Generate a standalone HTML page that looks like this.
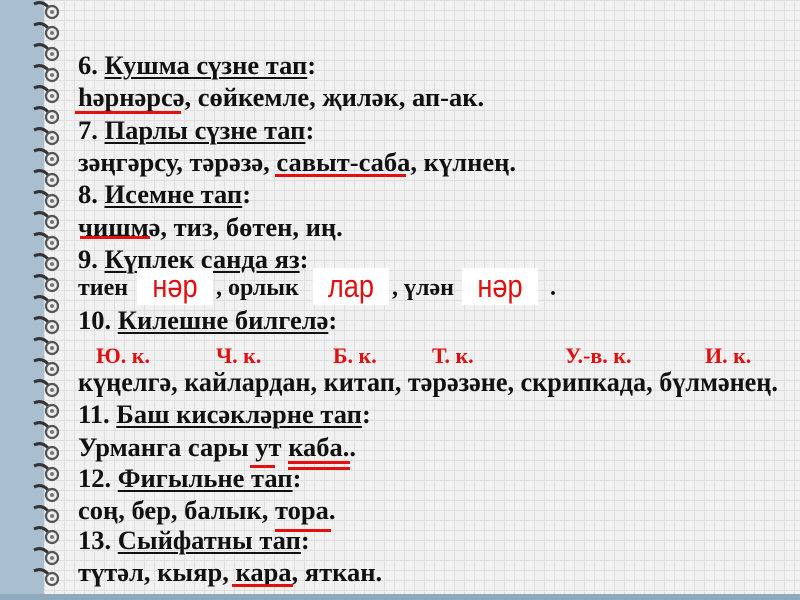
<!DOCTYPE html>
<html><head><meta charset="utf-8"><style>
body{margin:0;width:800px;height:600px;overflow:hidden;position:relative;font-family:"Liberation Serif",serif;}
#paper{position:absolute;left:44px;top:0;width:756px;height:600px;background-color:#f1f1f1;
background-image:linear-gradient(#dedede 1px,transparent 1px),linear-gradient(90deg,#dedede 1px,transparent 1px);background-size:10px 10px;}
#strip{position:absolute;left:0;top:0;width:44px;height:600px;background:#a9bfcf;}
#bot{position:absolute;left:0;top:594px;width:800px;height:6px;background:#8fa9bd;}
.l{position:absolute;left:78px;font-weight:bold;font-size:26.5px;line-height:28px;white-space:nowrap;color:#111;}
u{text-decoration-thickness:2px;text-underline-offset:3px;}
.r{position:absolute;background:#e31010;height:3px;}
.box{position:absolute;background:#fff;top:268px;width:76px;height:37px;}
.box span{display:block;color:#e01010;font-size:32px;font-family:"Liberation Sans Narrow","Liberation Sans",sans-serif;text-align:center;line-height:37px;transform:scaleX(0.85);}
.lab{position:absolute;top:343px;color:#e01010;font-weight:bold;font-size:22px;line-height:26px;}
</style></head><body>
<div id="strip"></div><div id="paper"></div>
<svg style="position:absolute;left:30px;top:0" width="40" height="600" fill="none">
<defs><g id="coil"><path d="M4 -6 Q12 -10 18 -3" stroke="#333" stroke-width="3"/><circle cx="22" cy="2" r="6" stroke="#555" stroke-width="2.2"/><circle cx="22" cy="2" r="2" fill="#777"/></g></defs>
<use href="#coil" y="10"/><use href="#coil" y="31"/><use href="#coil" y="52"/><use href="#coil" y="73"/><use href="#coil" y="94"/><use href="#coil" y="115"/><use href="#coil" y="136"/><use href="#coil" y="157"/><use href="#coil" y="178"/><use href="#coil" y="199"/><use href="#coil" y="220"/><use href="#coil" y="241"/><use href="#coil" y="262"/><use href="#coil" y="283"/><use href="#coil" y="304"/><use href="#coil" y="325"/><use href="#coil" y="346"/><use href="#coil" y="367"/><use href="#coil" y="388"/><use href="#coil" y="409"/><use href="#coil" y="430"/><use href="#coil" y="451"/><use href="#coil" y="472"/><use href="#coil" y="493"/><use href="#coil" y="514"/><use href="#coil" y="535"/><use href="#coil" y="556"/><use href="#coil" y="577"/>
</svg>
<div id="bot"></div>
<div class="l" style="top:51px">6. <u>Кушма сүзне тап</u>:</div>
<div class="l" style="top:83px">һәрнәрсә, сөйкемле, җиләк, ап-ак.</div>
<div class="l" style="top:116px">7. <u>Парлы сүзне тап</u>:</div>
<div class="l" style="top:148px">зәңгәрсу, тәрәзә, савыт-саба, күлнең.</div>
<div class="l" style="top:180px">8. <u>Исемне тап</u>:</div>
<div class="l" style="top:213px">чишмә, тиз, бөтен, иң.</div>
<div class="l" style="top:245px">9. <u>Күплек санда яз</u>:</div>
<div class="l" style="top:274px;font-size:24px">тиен</div>
<div class="l" style="top:274px;left:216px;font-size:24px">, орлык</div>
<div class="l" style="top:274px;left:392px;font-size:24px">, үлән</div>
<div class="l" style="top:274px;left:550px;font-size:24px">.</div>
<div class="box" style="left:137px"><span>нәр</span></div>
<div class="box" style="left:313px"><span>лар</span></div>
<div class="box" style="left:462px"><span>нәр</span></div>
<div class="l" style="top:306px">10. <u>Килешне билгелә</u>:</div>
<div class="lab" style="left:96px">Ю. к.</div>
<div class="lab" style="left:216px">Ч. к.</div>
<div class="lab" style="left:333px">Б. к.</div>
<div class="lab" style="left:432px">Т. к.</div>
<div class="lab" style="left:565px">У.-в. к.</div>
<div class="lab" style="left:705px">И. к.</div>
<div class="l" style="top:368px;font-size:27px;transform:scaleX(0.97);transform-origin:left">күңелгә, кайлардан, китап, тәрәзәне, скрипкада, бүлмәнең.</div>
<div class="l" style="top:400px">11. <u>Баш кисәкләрне тап</u>:</div>
<div class="l" style="top:433px">Урманга сары ут каба..</div>
<div class="l" style="top:464px">12. <u>Фигыльне тап</u>:</div>
<div class="l" style="top:496px">соң, бер, балык, тора.</div>
<div class="l" style="top:526px">13. <u>Сыйфатны тап</u>:</div>
<div class="l" style="top:558px">түтәл, кыяр, кара, яткан.</div>
<div class="r" style="left:75px;top:111px;width:106px"></div>
<div class="r" style="left:275px;top:174px;width:131px"></div>
<div class="r" style="left:80px;top:236px;width:70px"></div>
<div class="r" style="left:250px;top:465px;width:25px"></div>
<div class="r" style="left:288px;top:461px;width:62px"></div>
<div class="r" style="left:288px;top:467px;width:62px"></div>
<div class="r" style="left:275px;top:529px;width:56px"></div>
<div class="r" style="left:232px;top:584px;width:61px"></div>
</body></html>
